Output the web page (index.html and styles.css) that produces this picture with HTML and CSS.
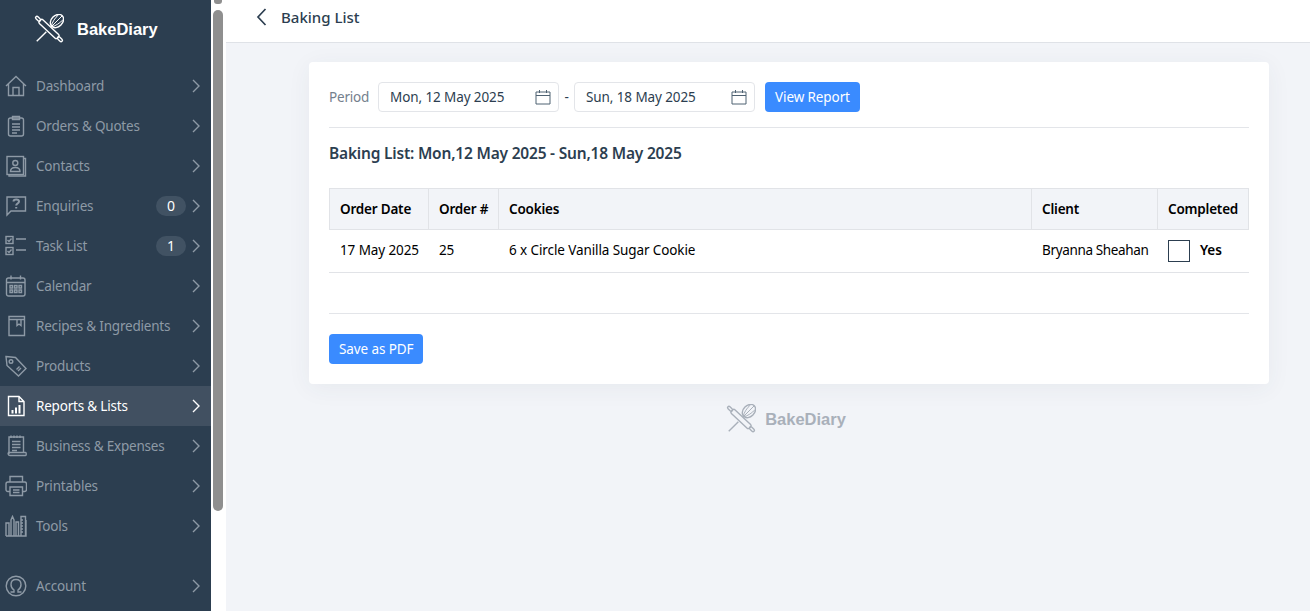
FILE: index.html
```html
<!doctype html>
<html>
<head>
	<meta charset="UTF-8">
	<meta name="viewport" content="width=device-width, initial-scale=1.0">
	<title>Baking List - BakeDiary</title>
	<link rel="stylesheet" href="styles.css">
</head>
<body>
	<svg class="defs">
		<defs>
			<g id="logo-mark" fill="none" stroke-width="1.500" stroke-linejoin="round">
				<g transform="rotate(45 16 16)">
					<path d="M16 34.500 V20 M16 12 V12.500"/>
					<ellipse cx="16" cy="4" rx="6" ry="8"/>
					<path d="M16 -4 V12 M12.500 -2 C12 3 13.500 9 15.500 12 M19.500 -2 C20 3 18.500 9 16.500 12" stroke-width="1"/>
				</g>
				<g transform="rotate(43 16 16)">
					<rect x="-3" y="14.500" width="6" height="3" rx="1.500"/>
					<rect x="3" y="13.300" width="26" height="5.400" rx="1.500"/>
					<rect x="29" y="14.500" width="6" height="3" rx="1.500"/>
				</g>
			</g>
		</defs>
	</svg>
	<div class="app">
		<aside class="sidebar">
			<div class="brand">
				<svg class="brand-mark" viewBox="0 0 32 32"><use href="#logo-mark" stroke="#fff"/></svg>
				<span class="brand-name">BakeDiary</span>
			</div>
			<nav class="menu">
				<a class="menu-item">
					<svg class="menu-icon" viewBox="0 0 22 22"><path d="M1 11 L11 1.500 L21 11 M3.500 9 V20.500 H18.500 V9 M8 20.500 V12.500 H14 V20.500"/></svg>
					<span class="menu-label">Dashboard</span>
					<svg class="chevron" viewBox="0 0 8 14"><path d="M1 1 L7 7 L1 13"/></svg>
				</a>
				<a class="menu-item">
					<svg class="menu-icon" viewBox="0 0 22 22"><rect x="3.500" y="3" width="15" height="18" rx="2"/><path d="M7.500 3 V1.500 H14.500 V4.500 H7.500 Z M7 9 H15 M7 12 H15 M7 15 H15 M7 18 H12"/></svg>
					<span class="menu-label">Orders &amp; Quotes</span>
					<svg class="chevron" viewBox="0 0 8 14"><path d="M1 1 L7 7 L1 13"/></svg>
				</a>
				<a class="menu-item">
					<svg class="menu-icon" viewBox="0 0 22 22"><rect x="2" y="1.500" width="16.500" height="18"/><path d="M18.500 3.500 H20.500 V21 H4 V19.500"/><circle cx="10.300" cy="8" r="2.500"/><path d="M5.500 16.500 C5.500 13 8 12.500 10.300 12.500 C12.600 12.500 15 13 15 16.500 Z"/></svg>
					<span class="menu-label">Contacts</span>
					<svg class="chevron" viewBox="0 0 8 14"><path d="M1 1 L7 7 L1 13"/></svg>
				</a>
				<a class="menu-item">
					<svg class="menu-icon" viewBox="0 0 22 22"><path d="M2 2 H20.500 V16 H6 L2 20 Z"/><path class="mark" d="M8.500 6.500 C8.500 3.800 14 3.800 14 6.500 C14 8.500 11.200 8.500 11.200 10.500 M11.200 12 V13.500"/></svg>
					<span class="menu-label">Enquiries</span>
					<span class="badge">0</span>
					<svg class="chevron" viewBox="0 0 8 14"><path d="M1 1 L7 7 L1 13"/></svg>
				</a>
				<a class="menu-item">
					<svg class="menu-icon" viewBox="0 0 22 22"><rect x="1" y="1.500" width="7" height="7"/><rect x="1" y="12.500" width="7" height="7"/><path d="M2.500 5 L4 6.500 L6.500 3.500 M2.500 16 L4 17.500 L6.500 14.500 M11 4 H21 M11 15 H21"/></svg>
					<span class="menu-label">Task List</span>
					<span class="badge">1</span>
					<svg class="chevron" viewBox="0 0 8 14"><path d="M1 1 L7 7 L1 13"/></svg>
				</a>
				<a class="menu-item">
					<svg class="menu-icon" viewBox="0 0 22 22"><rect x="1.500" y="3" width="18.500" height="18" rx="2"/><path d="M1.500 7.500 H20 M6 .5 V4.500 M15.500 .5 V4.500"/><path d="M5 10.500 H7.500 V13 H5 Z M9.500 10.500 H12 V13 H9.500 Z M14 10.500 H16.500 V13 H14 Z M5 15 H7.500 V17.500 H5 Z M9.500 15 H12 V17.500 H9.500 Z M14 15 H16.500 V17.500 H14 Z"/></svg>
					<span class="menu-label">Calendar</span>
					<svg class="chevron" viewBox="0 0 8 14"><path d="M1 1 L7 7 L1 13"/></svg>
				</a>
				<a class="menu-item">
					<svg class="menu-icon" viewBox="0 0 22 22"><path d="M4 1.500 H19.500 V20.500 H4 Z M4 4.500 H19.500 M12 4.500 V10.500 L14 9 L16 10.500 V4.500"/></svg>
					<span class="menu-label">Recipes &amp; Ingredients</span>
					<svg class="chevron" viewBox="0 0 8 14"><path d="M1 1 L7 7 L1 13"/></svg>
				</a>
				<a class="menu-item">
					<svg class="menu-icon" viewBox="0 0 22 22"><path d="M1 1.500 L10.500 2.500 L21 13.500 L13.500 21 L2 10.500 Z"/><circle cx="6" cy="6.500" r="1.800"/><path d="M11.500 14.500 L14.500 11.500 M13 16 L16 13"/></svg>
					<span class="menu-label">Products</span>
					<svg class="chevron" viewBox="0 0 8 14"><path d="M1 1 L7 7 L1 13"/></svg>
				</a>
				<a class="menu-item is-active">
					<svg class="menu-icon" viewBox="0 0 22 22"><path d="M3.500 1.500 H14 L19 6.500 V20.500 H3.500 Z M14 1.500 V6.500 H19"/><path class="bars" d="M6.500 15 H8.500 V18.500 H6.500 Z M10 12.500 H12 V18.500 H10 Z M13.500 10 H15.500 V18.500 H13.500 Z"/></svg>
					<span class="menu-label">Reports &amp; Lists</span>
					<svg class="chevron" viewBox="0 0 8 14"><path d="M1 1 L7 7 L1 13"/></svg>
				</a>
				<a class="menu-item">
					<svg class="menu-icon" viewBox="0 0 22 22"><path d="M4 19 V2 H18.500 V17 M6 .5 V3 M9 .5 V3 M12 .5 V3 M15 .5 V3 M7 6.500 H15.500 M7 9.500 H15.500 M7 12.500 H15.500 M7 15.500 H12 M3 17.500 H20.500 C21.500 17.500 21.500 20.500 20.500 20.500 H5 C3 20.500 2.500 17.500 4 17.500"/></svg>
					<span class="menu-label">Business &amp; Expenses</span>
					<svg class="chevron" viewBox="0 0 8 14"><path d="M1 1 L7 7 L1 13"/></svg>
				</a>
				<a class="menu-item">
					<svg class="menu-icon" viewBox="0 0 22 22"><path d="M5 7 V1.500 H17.500 V7 M5 16.500 H3 C1.500 16.500 1 15.500 1 14.500 V9 C1 8 2 7 3 7 H19.500 C20.500 7 21.500 8 21.500 9 V14.500 C21.500 15.500 21 16.500 19.500 16.500 H17.500"/><path d="M5 12 H17.500 V20.500 H5 Z M8 15 H14.500 M8 17.500 H14.500"/></svg>
					<span class="menu-label">Printables</span>
					<svg class="chevron" viewBox="0 0 8 14"><path d="M1 1 L7 7 L1 13"/></svg>
				</a>
				<a class="menu-item">
					<svg class="menu-icon" viewBox="0 0 22 22"><path d="M1 21 H21 V5 M1 21 V8 H4 V21 M6 21 V5 L7.500 1.500 L9 5 V21 M11 21 V7 H13.500 V21 M16 21 V1.500 H20.500 V21 M16 5 H18 M16 8 H18 M16 11 H18 M16 14 H18 M16 17 H18"/></svg>
					<span class="menu-label">Tools</span>
					<svg class="chevron" viewBox="0 0 8 14"><path d="M1 1 L7 7 L1 13"/></svg>
				</a>
				<a class="menu-item menu-account">
					<svg class="menu-icon" viewBox="0 0 22 22"><circle cx="11" cy="11" r="9.800"/><path d="M5.500 17 H9 V15 C6.500 13.500 6 11.500 6 9.500 C6 6.500 8 4.500 11 4.500 C14 4.500 16 6.500 16 9.500 C16 11.500 15.500 13.500 13 15 V17 H16.500"/></svg>
					<span class="menu-label">Account</span>
					<svg class="chevron" viewBox="0 0 8 14"><path d="M1 1 L7 7 L1 13"/></svg>
				</a>
			</nav>
		</aside>
		<div class="scrollbar">
			<div class="scroll-arrow"></div>
			<div class="scroll-thumb"></div>
		</div>
		<main class="main">
			<header class="topbar">
				<svg class="back" viewBox="0 0 10 18"><path d="M9 1 L1.500 9 L9 17"/></svg>
				<h1 class="page-title">Baking List</h1>
			</header>
			<div class="content">
				<section class="card">
					<div class="period-row">
						<label class="period-label">Period</label>
						<div class="date-input">
							<span class="date-text">Mon, 12 May 2025</span>
							<svg class="cal" viewBox="0 0 16 16"><path d="M1 3 H15 V15 H1 Z M1 6.500 H15 M4.500 1 V4 M11.500 1 V4"/></svg>
						</div>
						<span class="dash">-</span>
						<div class="date-input">
							<span class="date-text">Sun, 18 May 2025</span>
							<svg class="cal" viewBox="0 0 16 16"><path d="M1 3 H15 V15 H1 Z M1 6.500 H15 M4.500 1 V4 M11.500 1 V4"/></svg>
						</div>
						<button type="button" class="btn btn-view">View Report</button>
					</div>
					<hr class="rule">
					<h2 class="report-title">Baking List: Mon,12 May 2025 - Sun,18 May 2025</h2>
					<table class="report">
						<thead>
							<tr>
								<th class="col-date">Order Date</th>
								<th class="col-num">Order #</th>
								<th>Cookies</th>
								<th class="col-client">Client</th>
								<th class="col-done">Completed</th>
							</tr>
						</thead>
						<tbody>
							<tr>
								<td>17 May 2025</td>
								<td>25</td>
								<td>6 x Circle Vanilla Sugar Cookie</td>
								<td class="client-cell">Bryanna Sheahan</td>
								<td class="done-cell">
									<div class="done">
										<span class="checkbox"></span>
										<span class="done-label">Yes</span>
									</div>
								</td>
							</tr>
						</tbody>
					</table>
					<hr class="rule rule-bottom">
					<button type="button" class="btn">Save as PDF</button>
				</section>
				<div class="foot-logo">
					<svg class="foot-mark" viewBox="0 0 32 32"><use href="#logo-mark" stroke="#a9b0ba"/></svg>
					<span class="foot-name">BakeDiary</span>
				</div>
			</div>
		</main>
	</div>
</body>
</html>
```

FILE: styles.css
```css
* {
	padding: 0;
	margin: 0;
	box-sizing: border-box;
}
html, body {
	height: 100%;
	overflow: hidden;
}
body {
	font-family: "Noto Sans", "Open Sans", sans-serif;
	font-size: 13.5px;
	letter-spacing: -0.2px;
	color: #000;
	background-color: #f2f4f8;
}
.defs {
	display: none;
}
.app {
	display: flex;
	height: 611px;
}

/* sidebar */
.sidebar {
	width: 211px;
	flex: none;
	background-color: #2c3e50;
}
.brand {
	display: flex;
	align-items: center;
	height: 66px;
	padding: 0 0 8px 34px;
}
.brand-mark {
	width: 30px;
	height: 30px;
	margin-right: 13px;
}
.brand-name {
	font-family: "Liberation Sans", sans-serif;
	font-size: 16.500px;
	font-weight: 700;
	letter-spacing: 0;
	color: #fff;
}
.menu-item {
	display: flex;
	align-items: center;
	height: 40px;
	padding: 0 11px 0 5px;
	color: #8e9aa6;
}
.menu-icon {
	width: 22px;
	height: 22px;
	margin-right: 9px;
	flex: none;
	fill: none;
	stroke: #8e9aa6;
	stroke-width: 1.400;
}
.menu-icon .mark {
	stroke-width: 2;
}
.menu-label {
	flex: 1;
	white-space: nowrap;
	padding-bottom: 1px;
}
.chevron {
	width: 8px;
	height: 14px;
	flex: none;
	fill: none;
	stroke: #8e9aa6;
	stroke-width: 1.400;
}
.badge {
	width: 30px;
	height: 20px;
	margin-right: 6px;
	border-radius: 10px;
	background-color: #415263;
	color: #fff;
	font-size: 14px;
	text-align: center;
	line-height: 20px;
}
.is-active {
	background-color: #415061;
	color: #fff;
}
.is-active .menu-icon {
	stroke: #fff;
}
.is-active .bars {
	fill: #fff;
	stroke: none;
}
.is-active .chevron {
	stroke: #fff;
}
.menu-account {
	margin-top: 20px;
}

/* browser scrollbar */
.scrollbar {
	width: 15px;
	flex: none;
	padding: 0 3px 0 2px;
	background-color: #fff;
}
.scroll-arrow {
	height: 4px;
	width: 8px;
	margin: 0 auto 6px;
	border-radius: 0 0 3px 3px;
	background-color: #8f8f8f;
}
.scroll-thumb {
	height: 501px;
	border-radius: 5px;
	background-color: #8f8f8f;
}

/* main area */
.main {
	flex: 1;
	min-width: 0;
}
.topbar {
	display: flex;
	align-items: center;
	height: 43px;
	padding: 0 0 8px 30px;
	background-color: #fff;
	border-bottom: 1px solid #dfe2e7;
}
.back {
	width: 11px;
	height: 18px;
	margin-right: 14px;
	fill: none;
	stroke: #2c3e50;
	stroke-width: 1.700;
}
.page-title {
	font-size: 15px;
	font-weight: 500;
	letter-spacing: 0;
	color: #2c3e50;
}
.content {
	padding: 19px 41px 0 83px;
}
.card {
	height: 322px;
	padding: 20px;
	background-color: #fff;
	border-radius: 4px;
	box-shadow: 0 4px 24px rgba(44, 62, 80, 0.06);
}
.period-row {
	display: flex;
	align-items: center;
	height: 30px;
}
.period-label {
	width: 49px;
	padding-bottom: 1px;
	color: #74808d;
}
.date-input {
	display: flex;
	align-items: center;
	justify-content: space-between;
	width: 181px;
	height: 30px;
	padding: 0 7px 0 11px;
	border: 1px solid #e3e5e9;
	border-radius: 4px;
	color: #2c3e50;
}
.date-text {
	padding-bottom: 1px;
	letter-spacing: -0.1px;
}
.cal {
	width: 16px;
	height: 16px;
	fill: none;
	stroke: #4f6272;
	stroke-width: 1;
}
.dash {
	width: 15px;
	text-align: center;
	color: #2c3e50;
}
.btn {
	height: 30px;
	padding: 0 10px;
	border: none;
	border-radius: 4px;
	background-color: #3a8bff;
	color: #fff;
	font-family: inherit;
	font-size: 13.500px;
	letter-spacing: -0.1px;
}
.btn-view {
	margin-left: 10px;
}
.rule {
	border: none;
	border-top: 1px solid #e3e5e9;
}
.period-row + .rule {
	margin-top: 15px;
}
.report-title {
	margin-top: 14px;
	font-size: 15.500px;
	line-height: 22px;
	font-weight: 600;
	letter-spacing: -0.2px;
	color: #2c3e50;
}
.report {
	width: 100%;
	margin-top: 24px;
	border-collapse: collapse;
	table-layout: fixed;
}
.report th {
	height: 41px;
	padding: 0 10px;
	text-align: left;
	font-weight: 600;
	white-space: nowrap;
	background-color: #f2f4f8;
	border: 1px solid #e1e3e7;
}
.report td {
	height: 43px;
	padding: 0 10px 2px;
	letter-spacing: -0.1px;
	white-space: nowrap;
	border-left: 1px solid transparent;
	border-bottom: 1px solid #e1e3e7;
}
.report td.client-cell {
	letter-spacing: -0.35px;
}
.report td.done-cell {
	padding-bottom: 0;
}
.col-date {
	width: 99px;
}
.col-num {
	width: 70px;
}
.col-client {
	width: 126px;
}
.col-done {
	width: 91px;
}
.done {
	display: flex;
	align-items: center;
}
.checkbox {
	width: 22px;
	height: 22px;
	margin-right: 10px;
	border: 1px solid #2c3e50;
}
.done-label {
	font-weight: 600;
	padding-bottom: 2px;
}
.rule-bottom {
	margin: 40px 0 20px;
}
.foot-logo {
	display: flex;
	align-items: center;
	justify-content: center;
	height: 30px;
	margin-top: 20px;
	padding-right: 6px;
}
.foot-mark {
	width: 30px;
	height: 30px;
	margin-right: 9px;
}
.foot-name {
	font-family: "Liberation Sans", sans-serif;
	font-size: 16.500px;
	font-weight: 700;
	letter-spacing: 0;
	color: #a9b0ba;
}
```
